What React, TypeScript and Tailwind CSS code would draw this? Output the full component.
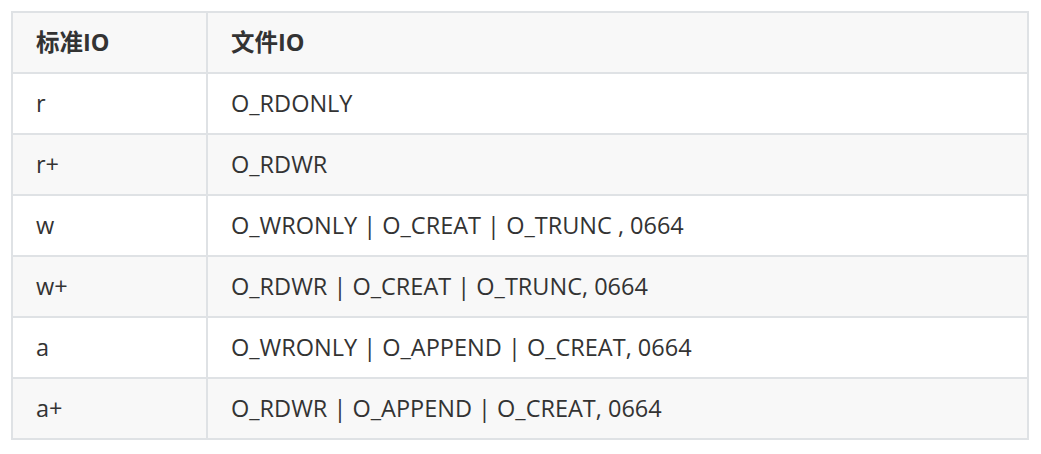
const rows: [string, string][] = [
  ["r", "O_RDONLY"],
  ["r+", "O_RDWR"],
  ["w", "O_WRONLY | O_CREAT | O_TRUNC , 0664"],
  ["w+", "O_RDWR | O_CREAT | O_TRUNC, 0664"],
  ["a", "O_WRONLY | O_APPEND | O_CREAT, 0664"],
  ["a+", "O_RDWR | O_APPEND | O_CREAT, 0664"],
];

export default function App() {
  return (
    <div
      className="w-[1041px] h-[454px] bg-white pl-[11px] pt-[11px] text-[#333333]"
      style={{ fontFamily: '"Open Sans", "Noto Sans CJK SC", sans-serif' }}
    >
      <table className="w-[1018px] border-collapse border-2 border-[#dfe2e5] text-[23.5px]">
        <thead>
          <tr className="bg-[#f8f8f8] h-[61px]">
            <th className="w-[195px] border-2 border-[#dfe2e5] px-[23px] text-left font-bold">标准IO</th>
            <th className="border-2 border-[#dfe2e5] px-[23px] text-left font-bold">文件IO</th>
          </tr>
        </thead>
        <tbody>
          {rows.map(([a, b], i) => (
            <tr key={a} className={i % 2 === 1 ? "bg-[#f8f8f8] h-[61px]" : "bg-white h-[61px]"}>
              <td className="border-2 border-[#dfe2e5] px-[23px]">{a}</td>
              <td className="border-2 border-[#dfe2e5] px-[23px]">{b}</td>
            </tr>
          ))}
        </tbody>
      </table>
    </div>
  );
}
